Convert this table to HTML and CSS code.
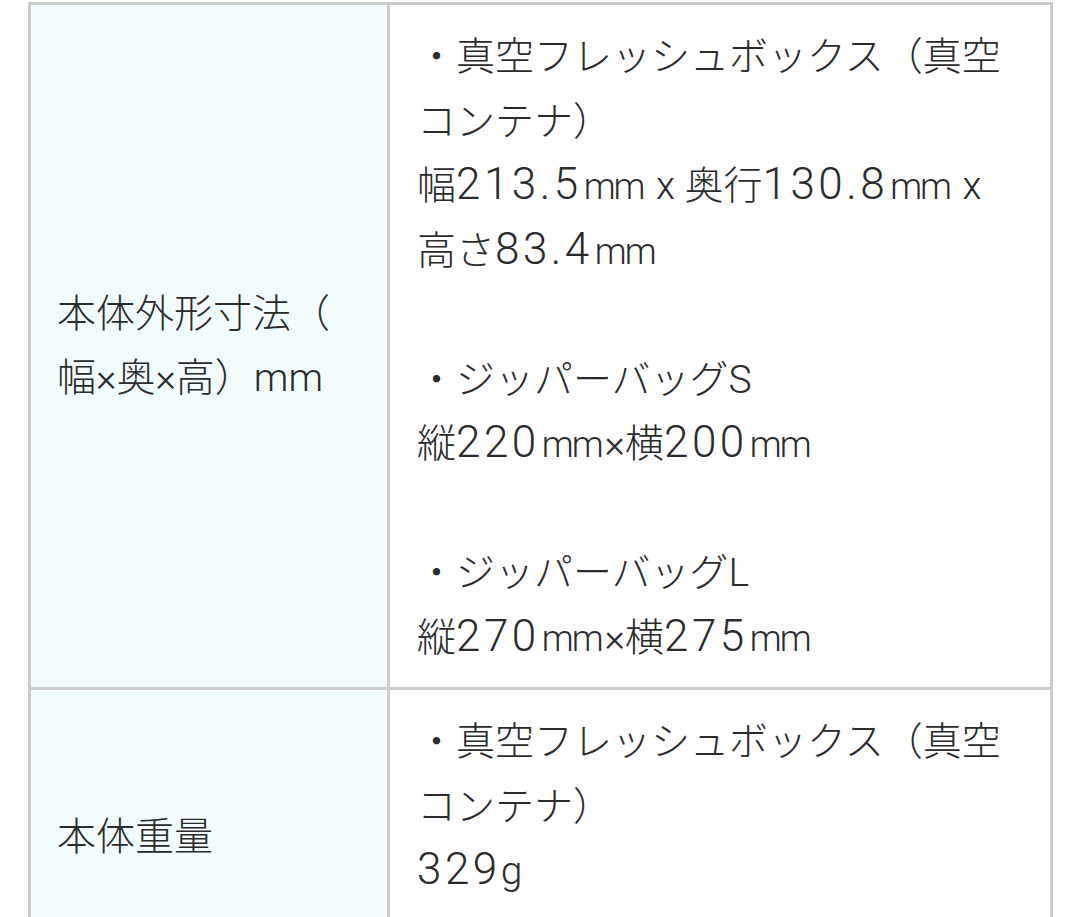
FILE: index.html
```html
<!DOCTYPE html>
<html lang="ja">
<head>
<meta charset="utf-8">
<link rel="stylesheet" href="styles.css">
</head>
<body>
<table class="spec">
  <colgroup><col class="col-head"><col class="col-body"></colgroup>
  <tbody>
    <tr>
      <th class="label">本体外形寸法（幅×奥×高）mm</th>
      <td class="value">
        <p>・真空フレッシュボックス（真空コンテナ）</p>
        <p>幅<span class="num">213.5</span><span class="unit">mm</span> x 奥行<span class="num">130.8</span><span class="unit">mm</span> x 高さ<span class="num">83.4</span><span class="unit">mm</span></p>
        <p class="gap">&nbsp;</p>
        <p>・ジッパーバッグS</p>
        <p>縦<span class="num">220</span><span class="unit">mm</span>×横<span class="num">200</span><span class="unit">mm</span></p>
        <p class="gap">&nbsp;</p>
        <p>・ジッパーバッグL</p>
        <p>縦<span class="num">270</span><span class="unit">mm</span>×横<span class="num">275</span><span class="unit">mm</span></p>
      </td>
    </tr>
    <tr>
      <th class="label">本体重量</th>
      <td class="value">
        <p>・真空フレッシュボックス（真空コンテナ）</p>
        <p><span class="num">329</span>g</p>
        <p class="gap">&nbsp;</p>
      </td>
    </tr>
  </tbody>
</table>
</body>
</html>
```

FILE: styles.css
```css
html, body {
  margin: 0;
  padding: 0;
  background: #ffffff;
}

body {
  font-family: Roboto, "Noto Sans CJK JP", sans-serif;
  font-weight: 300;
  color: #2b2b2b;
  overflow: hidden;
}

.spec {
  border-collapse: collapse;
  table-layout: fixed;
  width: 1025px;
  margin: 2px 0 0 28px;
  font-size: 39px;
  line-height: 64.5px;
}

.col-head { width: 359px; }

.spec th,
.spec td {
  border: 3px solid #cccccc;
  vertical-align: middle;
  text-align: left;
  font-weight: 300;
}

.label {
  background: #f2fbfe;
  padding: 18px 30px 18px 26px;
  line-break: anywhere;
}

.value {
  background: #ffffff;
  padding: 20px 30px 17px 27px;
}

.value p {
  margin: 0;
}

.num {
  font-size: 44px;
  line-height: 1;
  letter-spacing: 3.5px;
}

.unit {
  font-size: 36px;
  line-height: 1;
  letter-spacing: -2px;
  margin-left: 2px;
  margin-right: 3px;
}
```
